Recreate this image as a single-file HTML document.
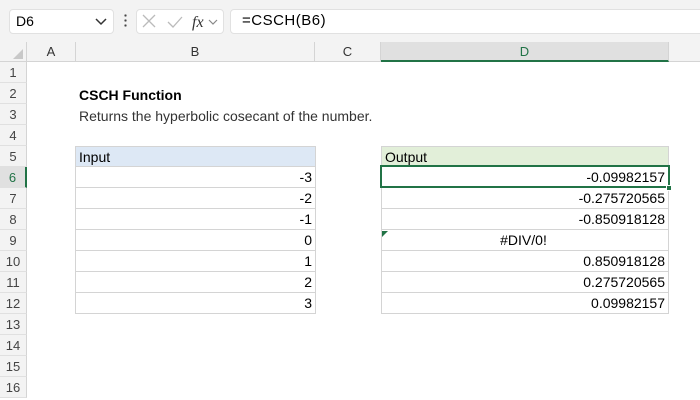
<!DOCTYPE html>
<html><head><style>
*{margin:0;padding:0;box-sizing:border-box}
body{width:700px;height:400px;overflow:hidden;background:#fff;font-family:"Liberation Sans",Arial,sans-serif;font-size:14px;color:#000;position:relative}
.a{position:absolute}
.tb{left:0;top:0;width:700px;height:42px;background:#f3f3f3}
.box{background:#fff;border:1px solid #e1e1e1;border-radius:4px}
.ch{top:42px;height:20px;background:#f3f3f3;border-right:1px solid #d4d4d4;border-bottom:1px solid #d4d4d4;text-align:center;font-size:13px;color:#333;line-height:20px}
.rh{left:0;width:27px;height:21px;background:#f3f3f3;border-bottom:1px solid #e0e0e0;border-right:1px solid #d4d4d4;text-align:center;font-size:13px;color:#444;line-height:21px}
.c{height:21px;border:1px solid #d4d4d4;border-top:none;text-align:right;padding-right:3px;line-height:20px;font-size:14px}
</style></head><body>
<div class="a tb"></div>
<div class="a box" style="left:9px;top:9px;width:105px;height:25px"></div>
<div class="a" style="left:16px;top:13px;font-size:14px">D6</div>
<svg class="a" style="left:95px;top:17px" width="12" height="10"><path d="M1 2l5 5 5-5" fill="none" stroke="#333" stroke-width="1.5"/></svg>
<div class="a" style="left:124px;top:13px;width:3px;height:14px;background:radial-gradient(circle,#444 1px,transparent 1.3px) 0 0/3px 5px"></div>
<div class="a box" style="left:136px;top:9px;width:88px;height:25px"></div>
<svg class="a" style="left:140px;top:12px" width="82" height="20"><path d="M3 3l12 12M15 3L3 15" stroke="#bbb" stroke-width="1.3"/><path d="M28 10l5 5 9-10" fill="none" stroke="#bbb" stroke-width="1.3"/><text x="52" y="15" font-family="Liberation Serif" font-style="italic" font-size="16" fill="#333">fx</text><path d="M69 8l4 4 4-4" fill="none" stroke="#888" stroke-width="1.2"/></svg>
<div class="a box" style="left:230px;top:9px;width:475px;height:25px"></div>
<div class="a" style="left:242px;top:12px;font-size:15px;letter-spacing:0.5px">=CSCH(B6)</div>

<div class="a ch" style="left:0;width:27px"></div>
<svg class="a" style="left:12px;top:48px" width="12" height="12"><path d="M11 1V11H1z" fill="#c8c8c8"/></svg>
<div class="a ch" style="left:27px;width:49px">A</div>
<div class="a ch" style="left:76px;width:239px">B</div>
<div class="a ch" style="left:315px;width:66px">C</div>
<div class="a ch" style="left:381px;width:288px;background:#e0e0e0;border-bottom:2px solid #217346;color:#217346">D</div>
<div class="a ch" style="left:669px;width:40px"></div>

<div class="a rh" style="top:62px">1</div>
<div class="a rh" style="top:83px">2</div>
<div class="a rh" style="top:104px">3</div>
<div class="a rh" style="top:125px">4</div>
<div class="a rh" style="top:146px">5</div>
<div class="a rh" style="top:167px;background:#e0e0e0;border-right:2px solid #217346;color:#217346">6</div>
<div class="a rh" style="top:188px">7</div>
<div class="a rh" style="top:209px">8</div>
<div class="a rh" style="top:230px">9</div>
<div class="a rh" style="top:251px">10</div>
<div class="a rh" style="top:272px">11</div>
<div class="a rh" style="top:293px">12</div>
<div class="a rh" style="top:314px">13</div>
<div class="a rh" style="top:335px">14</div>
<div class="a rh" style="top:356px">15</div>
<div class="a rh" style="top:377px">16</div>

<div class="a" style="left:79px;top:87px;font-weight:bold;font-size:14px">CSCH Function</div>
<div class="a" style="left:79px;top:108px;font-size:14px;color:#333">Returns the hyperbolic cosecant of the number.</div>

<div class="a c" style="left:75px;top:146px;width:241px;border-top:1px solid #d4d4d4;background:#dde8f5;text-align:left;padding-left:3px">Input</div>
<div class="a c" style="left:75px;top:167px;width:241px">-3</div>
<div class="a c" style="left:75px;top:188px;width:241px">-2</div>
<div class="a c" style="left:75px;top:209px;width:241px">-1</div>
<div class="a c" style="left:75px;top:230px;width:241px">0</div>
<div class="a c" style="left:75px;top:251px;width:241px">1</div>
<div class="a c" style="left:75px;top:272px;width:241px">2</div>
<div class="a c" style="left:75px;top:293px;width:241px">3</div>

<div class="a c" style="left:381px;top:146px;width:288px;border-top:1px solid #d4d4d4;background:#e2efd9;text-align:left;padding-left:3px">Output</div>
<div class="a c" style="left:381px;top:167px;width:288px">-0.09982157</div>
<div class="a c" style="left:381px;top:188px;width:288px">-0.275720565</div>
<div class="a c" style="left:381px;top:209px;width:288px">-0.850918128</div>
<div class="a c" style="left:381px;top:230px;width:288px;text-align:center">#DIV/0!</div>
<div class="a c" style="left:381px;top:251px;width:288px">0.850918128</div>
<div class="a c" style="left:381px;top:272px;width:288px">0.275720565</div>
<div class="a c" style="left:381px;top:293px;width:288px">0.09982157</div>
<svg class="a" style="left:382px;top:231px" width="6" height="6"><path d="M0 0H6L0 6z" fill="#217346"/></svg>
<div class="a" style="left:380px;top:165px;width:290px;height:23px;border:2px solid #217346"></div>
<div class="a" style="left:666px;top:185px;width:6px;height:6px;background:#217346;border:1px solid #fff"></div>
</body></html>
